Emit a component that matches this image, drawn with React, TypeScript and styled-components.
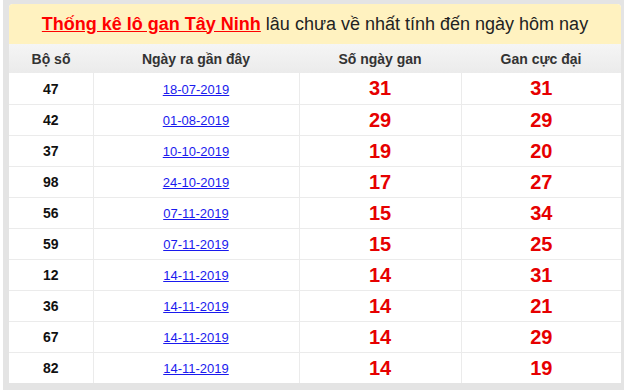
import React from "react";
import styled, { createGlobalStyle } from "styled-components";

const Global = createGlobalStyle`
  html, body { margin: 0; padding: 0; background: #fff; }
  body { font-family: "Liberation Sans", Arial, sans-serif; }
`;

const Outer = styled.div`
  margin-left: 3px;
  background: #e4e4e4;
  padding: 4px 3px 7px 6px;
  height: 390px;
  box-sizing: border-box;
  overflow: hidden;
`;

const Panel = styled.div`
  width: 612px;
  background: #fff;
  border-radius: 4px 4px 0 0;
  overflow: hidden;
`;

const Title = styled.div`
  height: 40px;
  background: #fff2c0;
  display: flex;
  align-items: center;
  justify-content: center;
  font-size: 18px;
  color: #222;
  white-space: nowrap;
`;

const TitleLink = styled.span`
  color: #f00;
  font-weight: bold;
  text-decoration: underline;
  margin-right: 5px;
`;

const Table = styled.table`
  width: 100%;
  border-collapse: collapse;
  table-layout: fixed;
`;

const Th = styled.th<{ $w: number }>`
  width: ${(p) => p.$w}px;
  height: 29px;
  padding: 0;
  font-size: 14px;
  font-weight: bold;
  color: #333;
  background: linear-gradient(#f5f5f5, #ebebeb);
  text-align: center;
`;

const Tr = styled.tr`
  height: 31px;
  border-top: 1px solid #ebebeb;
  &:first-child { border-top: none; }
`;

const Td = styled.td`
  padding: 0;
  padding-top: 1px;
  text-align: center;
  border-left: 1px solid #ebebeb;
  &:first-child { border-left: none; }
`;

const Lo = styled.span`
  font-size: 14px;
  font-weight: bold;
  color: #111;
`;

const DateLink = styled.a`
  font-size: 13px;
  color: #1a1aee;
  text-decoration: underline;
`;

const Big = styled.span`
  font-size: 20px;
  font-weight: bold;
  color: #e60000;
`;

const rows: [string, string, string, string][] = [
  ["47", "18-07-2019", "31", "31"],
  ["42", "01-08-2019", "29", "29"],
  ["37", "10-10-2019", "19", "20"],
  ["98", "24-10-2019", "17", "27"],
  ["56", "07-11-2019", "15", "34"],
  ["59", "07-11-2019", "15", "25"],
  ["12", "14-11-2019", "14", "31"],
  ["36", "14-11-2019", "14", "21"],
  ["67", "14-11-2019", "14", "29"],
  ["82", "14-11-2019", "14", "19"],
];

export default function App() {
  return (
    <>
      <Global />
      <Outer>
        <Panel>
          <Title>
            <TitleLink>Thống kê lô gan Tây Ninh</TitleLink>
            lâu chưa về nhất tính đến ngày hôm nay
          </Title>
          <Table>
            <thead>
              <tr>
                <Th $w={84}>Bộ số</Th>
                <Th $w={206}>Ngày ra gần đây</Th>
                <Th $w={162}>Số ngày gan</Th>
                <Th $w={160}>Gan cực đại</Th>
              </tr>
            </thead>
            <tbody>
              {rows.map((r, i) => (
                <Tr key={i}>
                  <Td><Lo>{r[0]}</Lo></Td>
                  <Td><DateLink href="#">{r[1]}</DateLink></Td>
                  <Td><Big>{r[2]}</Big></Td>
                  <Td><Big>{r[3]}</Big></Td>
                </Tr>
              ))}
            </tbody>
          </Table>
        </Panel>
      </Outer>
    </>
  );
}
